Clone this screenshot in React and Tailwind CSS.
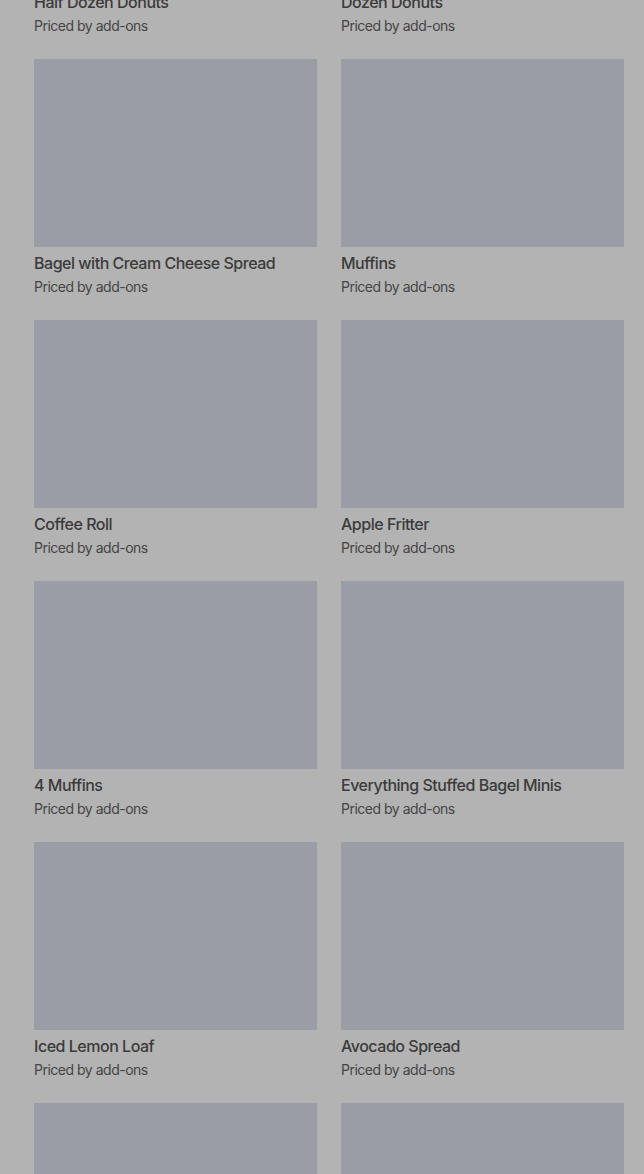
const items = [
  'Half Dozen Donuts',
  'Dozen Donuts',
  'Bagel with Cream Cheese Spread',
  'Muffins',
  'Coffee Roll',
  'Apple Fritter',
  '4 Muffins',
  'Everything Stuffed Bagel Minis',
  'Iced Lemon Loaf',
  'Avocado Spread',
]

export default function App() {
  return (
    <div
      className="h-[1174px] overflow-hidden bg-[#b3b3b3]"
      style={{ fontFamily: 'Inter, "Noto Sans", sans-serif' }}
    >
      <div className="-mt-[202px] grid grid-cols-2 gap-x-6 gap-y-[23px] pl-[34px] pr-5">
        {items.map((name) => (
          <div key={name} className="flex flex-col">
            <div className="h-[188px] bg-[#9a9da5]" />
            <div className="mt-[6px] text-base leading-5 font-medium text-[#3b3b3b] tracking-[-0.03em]">
              {name}
            </div>
            <div className="mt-1 text-sm leading-5 text-[#454545] tracking-[-0.035em]">
              Priced by add-ons
            </div>
          </div>
        ))}
        {/* next row, cut off by the viewport */}
        <div className="h-[188px] bg-[#9a9da5]" />
        <div className="h-[188px] bg-[#9a9da5]" />
      </div>
    </div>
  )
}
